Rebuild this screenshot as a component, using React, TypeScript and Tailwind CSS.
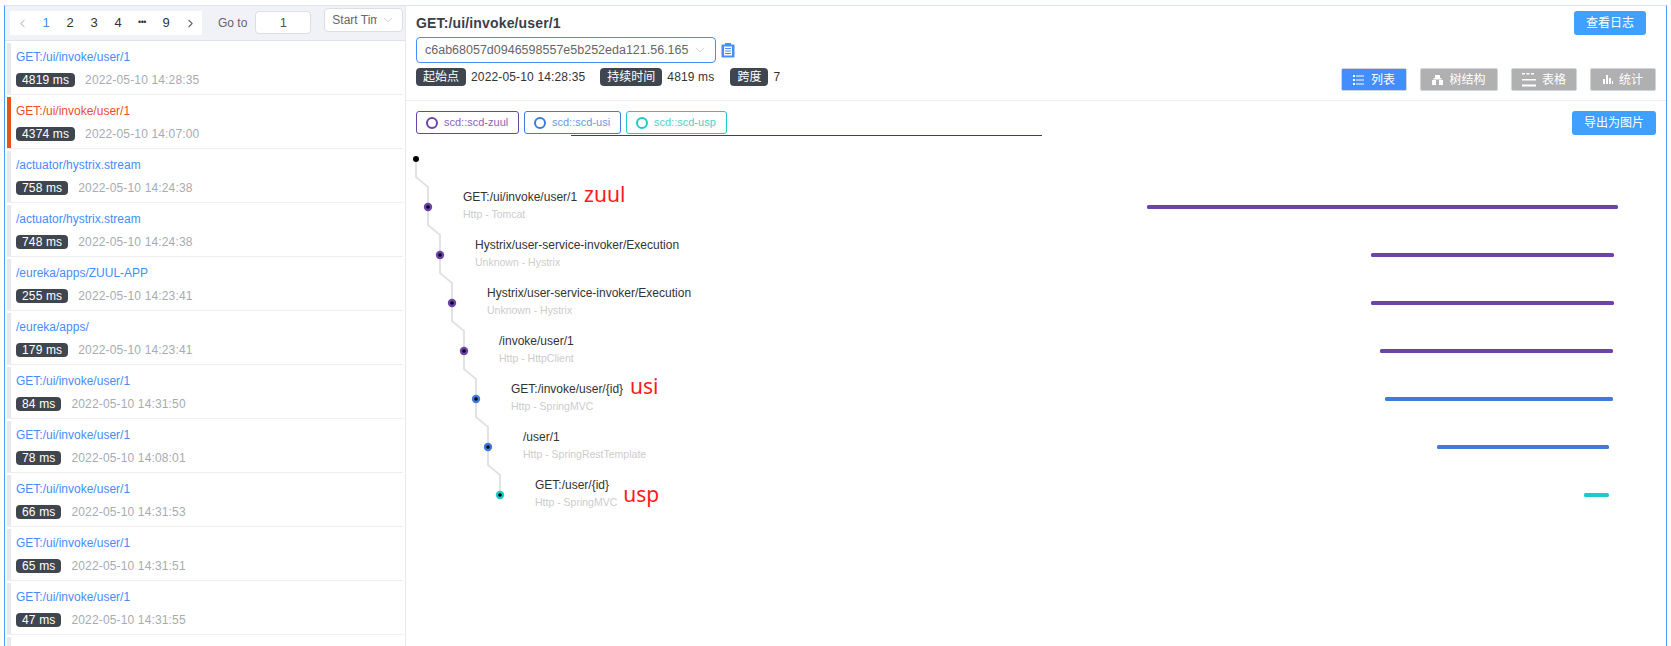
import { ChevronDown, ChevronLeft, ChevronRight } from "lucide-react";

const traces = [
  { name: "GET:/ui/invoke/user/1", ms: "4819 ms", time: "2022-05-10 14:28:35" },
  { name: "GET:/ui/invoke/user/1", ms: "4374 ms", time: "2022-05-10 14:07:00", active: true },
  { name: "/actuator/hystrix.stream", ms: "758 ms", time: "2022-05-10 14:24:38" },
  { name: "/actuator/hystrix.stream", ms: "748 ms", time: "2022-05-10 14:24:38" },
  { name: "/eureka/apps/ZUUL-APP", ms: "255 ms", time: "2022-05-10 14:23:41" },
  { name: "/eureka/apps/", ms: "179 ms", time: "2022-05-10 14:23:41" },
  { name: "GET:/ui/invoke/user/1", ms: "84 ms", time: "2022-05-10 14:31:50" },
  { name: "GET:/ui/invoke/user/1", ms: "78 ms", time: "2022-05-10 14:08:01" },
  { name: "GET:/ui/invoke/user/1", ms: "66 ms", time: "2022-05-10 14:31:53" },
  { name: "GET:/ui/invoke/user/1", ms: "65 ms", time: "2022-05-10 14:31:51" },
  { name: "GET:/ui/invoke/user/1", ms: "47 ms", time: "2022-05-10 14:31:55" },
  { name: "", ms: "", time: "" },
];

const PURPLE = "#6c44a8";
const BLUE = "#3e7bdb";
const TEAL = "#1ccbc5";

const spans = [
  { title: "GET:/ui/invoke/user/1", sub: "Http - Tomcat", note: "zuul", color: PURPLE, x1: 1147, x2: 1618 },
  { title: "Hystrix/user-service-invoker/Execution", sub: "Unknown - Hystrix", color: PURPLE, x1: 1371, x2: 1614 },
  { title: "Hystrix/user-service-invoker/Execution", sub: "Unknown - Hystrix", color: PURPLE, x1: 1371, x2: 1614 },
  { title: "/invoke/user/1", sub: "Http - HttpClient", color: PURPLE, x1: 1380, x2: 1613 },
  { title: "GET:/invoke/user/{id}", sub: "Http - SpringMVC", note: "usi", color: BLUE, x1: 1385, x2: 1613 },
  { title: "/user/1", sub: "Http - SpringRestTemplate", color: BLUE, x1: 1437, x2: 1609 },
  { title: "GET:/user/{id}", sub: "Http - SpringMVC", note: "usp", color: TEAL, x1: 1584, x2: 1609 },
];

const services = [
  { label: "scd::scd-zuul", border: "border-[#6c44a8]", text: "text-[#8a63bb]", w: "w-[103px]" },
  { label: "scd::scd-usi", border: "border-[#3e7bdb]", text: "text-[#6a98e4]", w: "w-[97px]" },
  { label: "scd::scd-usp", border: "border-[#1ccbc5]", text: "text-[#4fd0ca]", w: "w-[101px]" },
];

function Badge({ children }: { children: React.ReactNode }) {
  return <span className="rounded-[4px] bg-[#40464f] px-[7px] h-[18px] leading-[18px] text-white inline-block">{children}</span>;
}

function ViewButton({ label, icon, active, w }: { label: string; icon: React.ReactNode; active?: boolean; w: string }) {
  return (
    <button className={`${w} h-[23px] flex items-center justify-center gap-[6px] rounded-[2px] border border-[#cfd4dc] text-white text-[12px] ${active ? "bg-[#448dfe]" : "bg-[#b0b0b0]"}`}>
      {icon}
      {label}
    </button>
  );
}

function TraceChart() {
  // svg coords are page coords minus the chart's origin (406, 145)
  const ox = 406;
  const oy = 145;
  return (
    <div className="relative flex-1">
      <svg className="absolute left-0 top-0" width="1260" height="400">
        {spans.map((_, i) => (
          <path key={i} d={`M${416 + 12 * i - ox} ${159 + 48 * i - oy} v18 l12 10 v20`} fill="none" stroke="#e3e3e3" strokeWidth="2" />
        ))}
        <circle cx={416 - ox} cy={159 - oy} r="3" fill="#000" />
        {spans.map((s, i) => {
          const cx = 428 + 12 * i - ox;
          const cy = 207 + 48 * i - oy;
          return (
            <g key={i}>
              <circle cx={cx} cy={cy} r="4.2" fill={s.color} />
              <circle cx={cx} cy={cy} r="1.8" fill="#000" />
              <rect x={s.x1 - ox} y={cy - 2} width={s.x2 - s.x1} height="4" rx="1.5" fill={s.color} />
            </g>
          );
        })}
      </svg>
      <div className="relative pt-[42px] pl-[57px]">
        {spans.map((s, i) => (
          <div key={i} className="h-[48px]" style={{ paddingLeft: i * 12 }}>
            <div className="flex items-center h-[20px] text-[12px] text-[#333]">
              <span>{s.title}</span>
              {s.note && s.note !== "usp" && <span className="ml-[7px] -mt-[6px] text-[#ff1a1a] text-[21px] leading-[20px] font-['Noto_Sans',sans-serif]">{s.note}</span>}
            </div>
            <div className="flex items-center h-[16px] text-[10.5px] text-[#cccccc]">
              <span>{s.sub}</span>
              {s.note === "usp" && <span className="ml-[6px] -mt-[18px] text-[#ff1a1a] text-[21px] leading-[20px] font-['Noto_Sans',sans-serif]">{s.note}</span>}
            </div>
          </div>
        ))}
      </div>
    </div>
  );
}

export default function App() {
  return (
    <div className="w-[1671px] h-[646px] bg-white overflow-hidden pt-[5px] px-[4px] font-['Liberation_Sans','Noto_Sans_CJK_SC',sans-serif] text-[12px]">
      <div className="h-[641px] border-t border-t-[#dfe3ee] border-l border-l-[#4b9bf5] border-r border-r-[#4b9bf5] flex">
        {/* Trace list */}
        <div className="w-[401px] shrink-0 border-r border-[#e8e8ee] flex flex-col overflow-hidden">
          <div className="h-[35px] bg-[#f0f2f8] border-b border-[#dfe3ee] flex items-start pt-[5px] shrink-0">
            <div className="ml-[5px] w-[192px] h-[24px] bg-white grid grid-cols-8 items-center justify-items-center text-[13px] text-[#333]">
              <ChevronLeft size={13} className="text-[#ccc]" />
              <span className="text-[#448dfe]">1</span>
              <span>2</span>
              <span>3</span>
              <span>4</span>
              <span className="text-[9px] tracking-[-0.5px]">•••</span>
              <span>9</span>
              <ChevronRight size={13} className="text-[#666]" />
            </div>
            <span className="ml-[16px] mt-[3px] text-[#666]">Go to</span>
            <div className="ml-[8px] w-[56px] h-[23px] bg-white border border-[#dcdee2] rounded-[4px] flex items-center justify-center text-[#555] text-[13px]">1</div>
            <div className="ml-[13px] -mt-[3px] w-[79px] h-[24px] bg-white border border-[#dcdee2] rounded-[4px] flex items-center text-[#666] pl-[7px]">
              <span className="w-[45px] overflow-hidden whitespace-nowrap">Start Time</span>
              <ChevronDown size={14} strokeWidth={1} className="ml-[4px] text-[#aaa]" />
            </div>
          </div>
          <div className="flex-1 px-[2px] pt-[2px]">
            {traces.map((t, i) => (
              <div key={i} className="h-[52px] mb-[2px] border-b border-[#eeeeee] flex">
                <div className={`w-[4px] h-[51px] ${t.active ? "bg-[#e5531f]" : "bg-[#e8e8e8]"}`} />
                <div className="pl-[5px] pt-[4px]">
                  <div className={`h-[20px] leading-[20px] ${t.active ? "text-[#e8502a]" : "text-[#448dfe]"}`}>{t.name}</div>
                  {t.ms && (
                    <div className="mt-[4px] flex items-center">
                      <span className="bg-[#40464f] text-white rounded-[4px] h-[14px] leading-[14px] px-[6px] tracking-[0.15px]">{t.ms}</span>
                      <span className="ml-[10px] text-[#a7abb3] tracking-[0.15px]">{t.time}</span>
                    </div>
                  )}
                </div>
              </div>
            ))}
          </div>
        </div>

        {/* Trace detail */}
        <div className="flex-1 flex flex-col min-w-0">
          <div className="h-[95px] border-b border-[#eeeeee] pl-[10px] pr-[10px] pt-[5px] shrink-0">
            <div className="flex items-start justify-between pr-[10px]">
              <div className="text-[14px] leading-[24px] font-bold text-[#3a3f4a] tracking-[0.15px]">GET:/ui/invoke/user/1</div>
              <button className="w-[72px] h-[24px] rounded-[3px] bg-[#40a0ff] text-white text-[12px]">查看日志</button>
            </div>
            <div className="mt-[2px] flex items-center">
              <div className="w-[300px] h-[26px] rounded-[4px] border border-[#448dfe] flex items-center pl-[8px] text-[#666] text-[12.5px]">
                <span>c6ab68057d0946598557e5b252eda121.56.165</span>
                <ChevronDown size={14} strokeWidth={1} className="ml-[5px] text-[#aaa]" />
              </div>
              <svg className="ml-[5px]" width="14" height="15" viewBox="0 0 14 15">
                <rect x="0.5" y="1.5" width="13" height="13" rx="1" fill="#448dfe" />
                <rect x="3" y="3.5" width="8" height="9" fill="#fff" />
                <rect x="4" y="5" width="6" height="1" fill="#448dfe" />
                <rect x="4" y="7.5" width="6" height="1" fill="#448dfe" />
                <rect x="4" y="10" width="6" height="1" fill="#448dfe" />
                <rect x="4" y="0" width="6" height="3" fill="#448dfe" />
              </svg>
            </div>
            <div className="mt-[5px] flex items-start justify-between">
              <div className="flex items-center text-[#333] text-[12px]">
                <Badge>起始点</Badge>
                <span className="ml-[5px] tracking-[0.15px]">2022-05-10 14:28:35</span>
                <span className="ml-[15px]"><Badge>持续时间</Badge></span>
                <span className="ml-[5px] tracking-[0.15px]">4819 ms</span>
                <span className="ml-[16px]"><Badge>跨度</Badge></span>
                <span className="ml-[5px]">7</span>
              </div>
              <div className="flex gap-[13px]">
                <ViewButton label="列表" active w="w-[66px]" icon={<svg width="12" height="10" viewBox="0 0 12 10" fill="#fff"><rect x="0" y="0" width="2" height="2" /><rect x="3" y="0.5" width="8" height="1" /><rect x="0" y="4" width="2" height="2" /><rect x="3" y="4.5" width="8" height="1" /><rect x="0" y="8" width="2" height="2" /><rect x="3" y="8.5" width="8" height="1" /></svg>} />
                <ViewButton label="树结构" w="w-[78px]" icon={<svg width="11" height="10" viewBox="0 0 11 10" fill="#fff"><rect x="3" y="0" width="5" height="3" /><rect x="1.5" y="3" width="8" height="1.5" /><rect x="0" y="5" width="4" height="5" /><rect x="7" y="5" width="4" height="5" /></svg>} />
                <ViewButton label="表格" w="w-[66px]" icon={<svg width="14" height="14" viewBox="0 0 14 14" fill="#fff"><rect x="0" y="0" width="3" height="1.5" /><rect x="4.5" y="0" width="3" height="1.5" /><rect x="9" y="0" width="3" height="1.5" /><rect x="0" y="6" width="14" height="1.5" /><rect x="0" y="11.5" width="14" height="2" /></svg>} />
                <ViewButton label="统计" w="w-[66px]" icon={<svg width="10" height="9" viewBox="0 0 10 9" fill="#fff"><rect x="0" y="4" width="2" height="5" /><rect x="3" y="0" width="2" height="9" /><rect x="6" y="3" width="2" height="6" /><rect x="9" y="6" width="1" height="3" /></svg>} />
              </div>
            </div>
          </div>

          <div className="h-[44px] shrink-0 pl-[10px] pr-[10px] pt-[10px] flex items-start justify-between relative">
            <div className="flex gap-[5px]">
              {services.map((s) => (
                <div key={s.label} className={`${s.w} h-[23px] rounded-[3px] border bg-white flex items-center pl-[9px] gap-[6px] text-[11px] ${s.border} ${s.text}`}>
                  <span className={`w-[12px] h-[12px] rounded-full border-2 ${s.border}`} />
                  {s.label}
                </div>
              ))}
            </div>
            <button className="w-[84px] h-[24px] rounded-[3px] bg-[#40a0ff] text-white text-[12px]">导出为图片</button>
            <div className="absolute left-[165px] top-[34px] w-[471px] h-px bg-[#3c4350]" />
          </div>

          <TraceChart />
        </div>
      </div>
    </div>
  );
}
